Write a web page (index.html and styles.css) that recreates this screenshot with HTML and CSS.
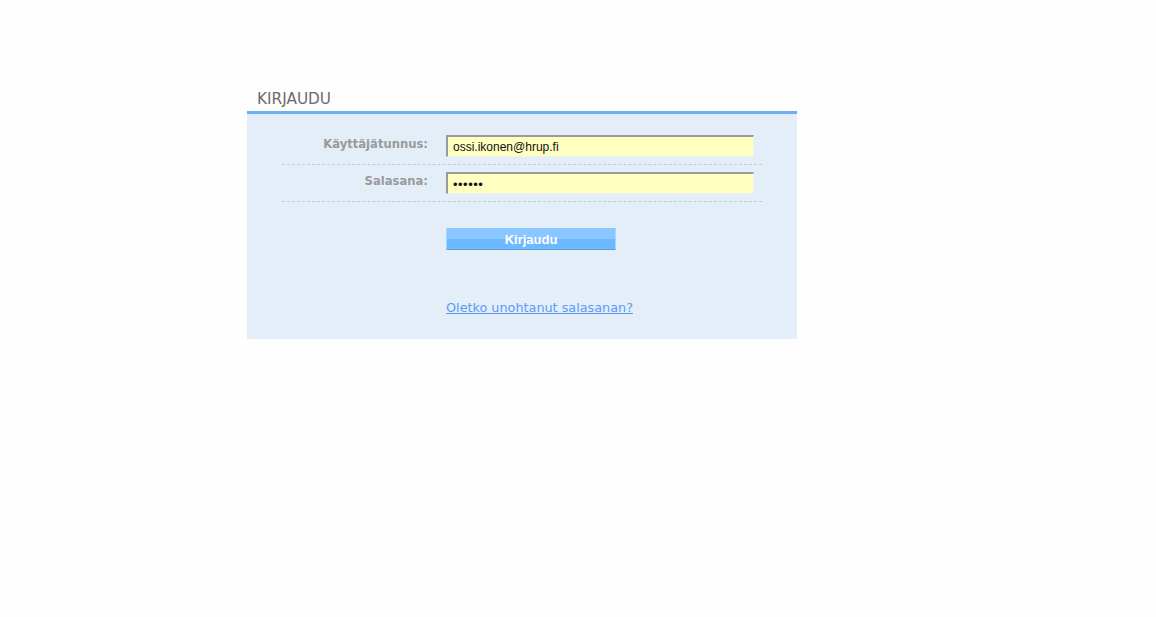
FILE: index.html
```html
<!DOCTYPE html>
<html lang="fi">
<head>
<meta charset="utf-8">
<title>Kirjaudu</title>
<link rel="stylesheet" href="styles.css">
</head>
<body>
<div class="wrap">
  <div class="title">KIRJAUDU</div>
  <div class="box">
    <form class="form">
      <div class="row">
        <label class="label">Käyttäjätunnus:</label>
        <input class="field" type="text" value="ossi.ikonen@hrup.fi">
      </div>
      <div class="row">
        <label class="label">Salasana:</label>
        <input class="field pass" type="password" value="secret">
      </div>
      <div class="actions">
        <button class="btn" type="button">Kirjaudu</button>
      </div>
      <div class="links">
        <a class="link" href="#">Oletko unohtanut salasanan?</a>
      </div>
    </form>
  </div>
</div>
</body>
</html>
```
FILE: styles.css
```css
html, body {
  margin: 0;
  padding: 0;
  background: #fefefe;
}
.wrap {
  margin-left: 247px;
  padding-top: 89px;
  width: 550px;
}
.title {
  font-family: "DejaVu Sans", Verdana, sans-serif;
  font-size: 15.3px;
  line-height: 20px;
  color: #6b6b6b;
  padding-left: 10px;
  height: 22px;
}
.box {
  border-top: 3px solid #6cb0f2;
  background: #e4eef9;
  height: 225px;
  box-sizing: content-box;
}
.form {
  margin: 0 35px 0 35px;
  padding-top: 14px;
}
.row {
  display: grid;
  grid-template-columns: 164px 308px;
  align-items: start;
  padding: 7px 0;
  border-bottom: 1px dashed #c3cad3;
}
.label {
  font-family: "DejaVu Sans", Verdana, sans-serif;
  font-size: 11.6px;
  font-weight: bold;
  color: #9a9a9a;
  text-align: right;
  padding-right: 18px;
  padding-top: 2px;
}
.field {
  box-sizing: border-box;
  width: 308px;
  height: 22px;
  margin: 0;
  padding: 1px 5px 0 5px;
  border-style: solid;
  border-width: 2px 1px 1px 2px;
  border-color: #9a9a9a #f0f0f0 #f0f0f0 #9a9a9a;
  background: #ffffc0;
  font-family: "Liberation Sans", Arial, sans-serif;
  font-size: 12px;
  color: #111;
  outline: none;
}
.pass {
  font-size: 13px;
  letter-spacing: 0.5px;
}
.actions {
  padding: 26px 0 0 164px;
}
.btn {
  display: block;
  box-sizing: border-box;
  width: 170px;
  height: 22px;
  margin: 0;
  padding: 2px 0 0 0;
  border: 0;
  border-left: 1px solid #a8d4ff;
  border-right: 1px solid #a8d4ff;
  border-bottom: 1px solid #5a9ee0;
  background: linear-gradient(#8ac6ff 0, #8ac6ff 50%, #6db9ff 50%, #6db9ff 100%);
  color: #fff;
  font-family: "Liberation Sans", Arial, sans-serif;
  font-size: 13px;
  font-weight: bold;
  line-height: 19px;
  cursor: pointer;
}
.links {
  padding: 48px 0 0 164px;
}
.link {
  font-family: "DejaVu Sans", Verdana, sans-serif;
  font-size: 12.8px;
  color: #5a9cf5;
  text-decoration: underline;
}
```
